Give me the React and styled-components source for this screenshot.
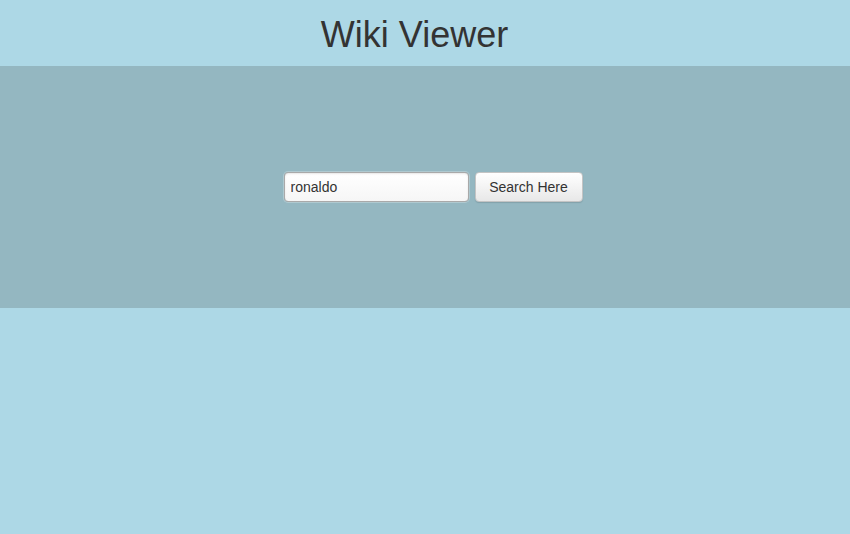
import React, { useState } from 'react'
import styled, { createGlobalStyle } from 'styled-components'

const GlobalStyle = createGlobalStyle`
  html, body {
    margin: 0;
    padding: 0;
    background: #add8e6;
    font-family: 'Liberation Sans', Arial, sans-serif;
    color: #333;
  }
`

export default function App() {
    const [query, setQuery] = useState('ronaldo')

    return (
        <>
            <GlobalStyle />
            <Page>
                <Header>
                    <Title>Wiki Viewer</Title>
                </Header>
                <SearchBand>
                    <SearchForm onSubmit={e => e.preventDefault()}>
                        <SearchInput
                            type="text"
                            value={query}
                            onChange={e => setQuery(e.target.value)}
                        />
                        <SearchButton type="submit">Search Here</SearchButton>
                    </SearchForm>
                </SearchBand>
                <Results />
            </Page>
        </>
    )
}

const Page = styled.div`
  min-height: 534px;
  display: flex;
  flex-direction: column;
`

const Header = styled.header`
  height: 66px;
  display: flex;
  align-items: center;
  justify-content: center;
  padding-right: 21px;
`

const Title = styled.h1`
  margin: 0;
  font-size: 36px;
  font-weight: 400;
  line-height: 1;
  color: #333;
  padding-top: 4px;
`

const SearchBand = styled.section`
  height: 242px;
  background: #94b7c1;
  display: flex;
  align-items: center;
  justify-content: center;
  padding-left: 16px;
`

const SearchForm = styled.form`
  display: flex;
  align-items: center;
  gap: 6px;
  margin: 0;
`

const SearchInput = styled.input`
  box-sizing: border-box;
  width: 185px;
  height: 30px;
  padding: 0 6px;
  font-family: 'Liberation Sans', Arial, sans-serif;
  font-size: 14px;
  color: #333;
  background: linear-gradient(to bottom, #ffffff 0%, #f6f6f6 100%);
  border: 1px solid #a9a9a9;
  border-radius: 4px;
  box-shadow: inset 0 1px 2px rgba(0, 0, 0, 0.1), 0 0 0 1px rgba(255, 255, 255, 0.25);
  outline: none;
`

const SearchButton = styled.button`
  box-sizing: border-box;
  width: 108px;
  height: 30px;
  font-family: 'Liberation Sans', Arial, sans-serif;
  font-size: 14px;
  color: #333;
  background: linear-gradient(to bottom, #ffffff 0%, #e8e8e8 100%);
  border: 1px solid #c4c4c4;
  border-radius: 4px;
  box-shadow: 0 1px 1px rgba(0, 0, 0, 0.12);
  cursor: pointer;
`

const Results = styled.div`
  flex: 1;
`
